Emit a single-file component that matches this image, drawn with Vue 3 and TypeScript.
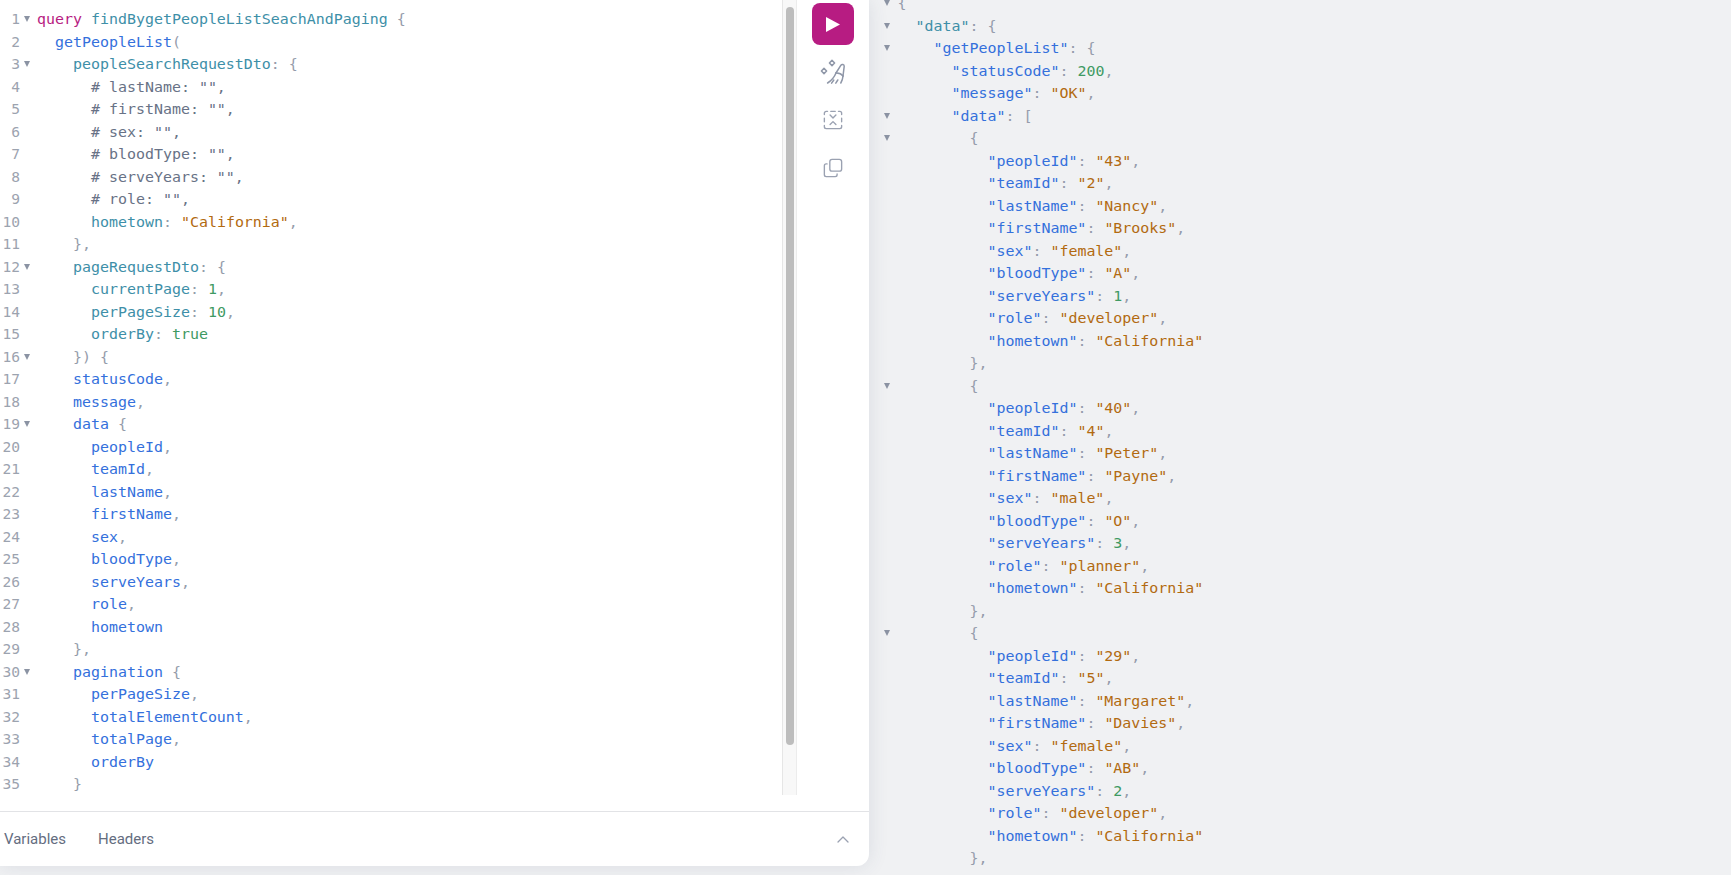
<script setup lang="ts">
type Tok = [string, string];
interface Line { indent: number; fold?: boolean; toks: Tok[] }

const L = (indent: number, fold: boolean, ...toks: Tok[]): Line => ({ indent, fold, toks });
const p = (s: string): Tok => ['pu', s];
const d = (s: string): Tok => ['de', s];
const f = (s: string): Tok => ['fi', s];
const c = (s: string): Tok => ['co', s];
const st = (s: string): Tok => ['st', s];
const n = (s: string): Tok => ['nu', s];
const k = (s: string): Tok => ['ke', s];
const sp: Tok = ['pu', ' '];

const query: Line[] = [
  L(0, true, k('query'), sp, d('findBygetPeopleListSeachAndPaging'), sp, p('{')),
  L(2, false, f('getPeopleList'), p('(')),
  L(4, true, d('peopleSearchRequestDto'), p(':'), sp, p('{')),
  L(6, false, c('# lastName: "",')),
  L(6, false, c('# firstName: "",')),
  L(6, false, c('# sex: "",')),
  L(6, false, c('# bloodType: "",')),
  L(6, false, c('# serveYears: "",')),
  L(6, false, c('# role: "",')),
  L(6, false, d('hometown'), p(':'), sp, st('"California"'), p(',')),
  L(4, false, p('},')),
  L(4, true, d('pageRequestDto'), p(':'), sp, p('{')),
  L(6, false, d('currentPage'), p(':'), sp, n('1'), p(',')),
  L(6, false, d('perPageSize'), p(':'), sp, n('10'), p(',')),
  L(6, false, d('orderBy'), p(':'), sp, n('true')),
  L(4, true, p('})'), sp, p('{')),
  L(4, false, f('statusCode'), p(',')),
  L(4, false, f('message'), p(',')),
  L(4, true, f('data'), sp, p('{')),
  ...['peopleId', 'teamId', 'lastName', 'firstName', 'sex', 'bloodType', 'serveYears', 'role'].map((x) =>
    L(6, false, f(x), p(',')),
  ),
  L(6, false, f('hometown')),
  L(4, false, p('},')),
  L(4, true, f('pagination'), sp, p('{')),
  L(6, false, f('perPageSize'), p(',')),
  L(6, false, f('totalElementCount'), p(',')),
  L(6, false, f('totalPage'), p(',')),
  L(6, false, f('orderBy')),
  L(4, false, p('}')),
];

const strProp = (indent: number, key: string, val: string, comma = true): Line =>
  L(indent, false, f(`"${key}"`), p(':'), sp, st(`"${val}"`), ...(comma ? [p(',')] : []));

const person = (
  id: string,
  team: string,
  last: string,
  first: string,
  sex: string,
  blood: string,
  years: string,
  role: string,
): Line[] => [
  L(8, true, p('{')),
  strProp(10, 'peopleId', id),
  strProp(10, 'teamId', team),
  strProp(10, 'lastName', last),
  strProp(10, 'firstName', first),
  strProp(10, 'sex', sex),
  strProp(10, 'bloodType', blood),
  L(10, false, f('"serveYears"'), p(':'), sp, n(years), p(',')),
  strProp(10, 'role', role),
  strProp(10, 'hometown', 'California', false),
  L(8, false, p('},')),
];

const result: Line[] = [
  L(0, true, p('{')),
  L(2, true, d('"data"'), p(':'), sp, p('{')),
  L(4, true, f('"getPeopleList"'), p(':'), sp, p('{')),
  L(6, false, f('"statusCode"'), p(':'), sp, n('200'), p(',')),
  strProp(6, 'message', 'OK'),
  L(6, true, f('"data"'), p(':'), sp, p('[')),
  ...person('43', '2', 'Nancy', 'Brooks', 'female', 'A', '1', 'developer'),
  ...person('40', '4', 'Peter', 'Payne', 'male', 'O', '3', 'planner'),
  ...person('29', '5', 'Margaret', 'Davies', 'female', 'AB', '2', 'developer'),
];

const pad = (i: number): string => ' '.repeat(i);
</script>

<template>
  <div class="page">
    <section class="editor-panel">
      <div class="editor-top">
        <div class="code query-code">
          <div v-for="(line, i) in query" :key="i" class="line">
            <span class="num">{{ i + 1 }}</span>
            <span class="fold"><i v-if="line.fold" class="tri"></i></span>
            <span class="text">{{ pad(line.indent) }}<span v-for="(t, j) in line.toks" :key="j" :class="t[0]">{{ t[1] }}</span></span>
          </div>
        </div>
        <div class="scroll-track"><div class="scroll-thumb"></div></div>
        <div class="toolbar">
          <button class="run" type="button" aria-label="Run">
            <svg width="14" height="15" viewBox="0 0 14 15"><path d="M0 0 L14 7.5 L0 15 Z" fill="#fff" /></svg>
          </button>
          <button class="tool first" type="button" aria-label="Prettify">
            <svg width="26" height="26" viewBox="0 0 26 26" fill="none" stroke="#8f97a8" stroke-width="1.5" stroke-linecap="round" stroke-linejoin="round">
              <path d="M12 1.4 L14.6 4 L12 6.6 L9.4 4 Z" />
              <path d="M4 9.4 L6.6 12 L4 14.6 L1.4 12 Z" />
              <path d="M16 14 L20.8 6.4 C21.8 4.8 24.4 5.4 24.2 7.4 L23 17" />
              <path d="M16 14 C18.2 13.8 21.4 15 23 17" />
              <path d="M16 14 C14.4 18 11.4 21.6 7.6 24" />
              <path d="M23 17 C22.8 19.6 22 22 20.8 24" />
              <path d="M11.6 24.2 L13.8 21 M15.8 24.2 L17.8 21" />
            </svg>
          </button>
          <button class="tool" type="button" aria-label="Merge">
            <svg width="20" height="20" viewBox="0 0 22 22" fill="none" stroke="#9aa1b1" stroke-width="1.5" stroke-linecap="round" stroke-linejoin="round">
              <path d="M1.5 5 V3.5 A2 2 0 0 1 3.5 1.5 H5 M8.5 1.5 H13.5 M17 1.5 H18.5 A2 2 0 0 1 20.5 3.5 V5" />
              <path d="M1.5 9 V13 M20.5 9 V13" />
              <path d="M1.5 17 V18.5 A2 2 0 0 0 3.5 20.5 H18.5 A2 2 0 0 0 20.5 18.5 V17" />
              <path d="M7.8 5.5 L11 8.7 L14.2 5.5 M7.8 16 L11 12.8 L14.2 16" />
            </svg>
          </button>
          <button class="tool" type="button" aria-label="Copy">
            <svg width="20" height="20" viewBox="0 0 22 22" fill="none" stroke="#9aa1b1" stroke-width="1.5" stroke-linecap="round" stroke-linejoin="round">
              <rect x="7.5" y="1.5" width="13" height="13" rx="2.5" />
              <path d="M4.5 6.5 H3.5 A2 2 0 0 0 1.5 8.5 V18.5 A2 2 0 0 0 3.5 20.5 H13.5 A2 2 0 0 0 15.5 18.5 V17.5" />
            </svg>
          </button>
        </div>
      </div>
      <footer class="tabs">
        <span class="tab">Variables</span>
        <span class="tab">Headers</span>
        <svg class="chevron" width="12" height="7" viewBox="0 0 12 7" fill="none" stroke="#9aa1b1" stroke-width="1.3" stroke-linecap="round" stroke-linejoin="round">
          <path d="M1 6 L6 1 L11 6" />
        </svg>
      </footer>
    </section>
    <section class="result-panel">
      <div class="code result-code">
        <div v-for="(line, i) in result" :key="i" class="line">
          <span class="fold"><i v-if="line.fold" class="tri"></i></span>
          <span class="text">{{ pad(line.indent) }}<span v-for="(t, j) in line.toks" :key="j" :class="t[0]">{{ t[1] }}</span></span>
        </div>
      </div>
    </section>
  </div>
</template>

<style scoped>
.page {
  display: flex;
  width: 1731px;
  height: 875px;
  overflow: hidden;
  background: #f0f1f3;
}
.editor-panel {
  position: relative;
  z-index: 1;
  flex: 0 0 869px;
  height: 866px;
  display: flex;
  flex-direction: column;
  background: #fff;
  border-bottom-right-radius: 12px;
  box-shadow: 0 0 20px rgba(59, 75, 104, 0.12);
}
.editor-top {
  display: flex;
  height: 811px;
  flex: none;
}
.code {
  font-family: "DejaVu Sans Mono", monospace;
  font-size: 14.95px;
  line-height: 22.5px;
  white-space: pre;
}
.query-code {
  flex: 0 0 782px;
  padding-top: 8px;
  overflow: hidden;
}
.line {
  display: flex;
  height: 22.5px;
  align-items: center;
}
.num {
  width: 20px;
  flex: none;
  text-align: right;
  color: #9ca3af;
  font-size: 14.6px;
}
.fold {
  flex: none;
  width: 17px;
  display: flex;
  align-items: center;
  justify-content: center;
}
.query-code .fold {
  justify-content: flex-start;
  padding-left: 4px;
  width: 13px;
  box-sizing: content-box;
}
.tri {
  display: block;
  width: 0;
  height: 0;
  border-left: 3.5px solid transparent;
  border-right: 3.5px solid transparent;
  border-top: 6px solid #8b93a3;
}
.text {
  flex: 1;
}
.scroll-track {
  flex: none;
  width: 15px;
  height: 795px;
  box-sizing: border-box;
  background: #f8f8f8;
  border-left: 1px solid #e6e6e6;
  border-right: 1px solid #ececec;
  padding: 7px 3px 0;
}
.scroll-thumb {
  width: 8px;
  height: 738px;
  background: #bdbdbd;
  border-radius: 4px;
}
.toolbar {
  flex: 1;
  display: flex;
  flex-direction: column;
  align-items: center;
  padding-top: 3px;
}
.run {
  width: 42px;
  height: 42px;
  padding: 0;
  border: 0;
  border-radius: 8px;
  background: #b71c82;
  display: flex;
  align-items: center;
  justify-content: center;
}
.tool {
  width: 42px;
  height: 48px;
  padding: 0;
  border: 0;
  background: none;
  display: flex;
  align-items: center;
  justify-content: center;
}
.tool.first {
  margin-top: 3px;
}
.tabs {
  flex: 1;
  display: flex;
  align-items: center;
  gap: 32px;
  padding-left: 4px;
  border-top: 1px solid #e2e3e6;
  font-family: Roboto, sans-serif;
  font-size: 15px;
  color: #646d7f;
  position: relative;
}
.chevron {
  position: absolute;
  right: 20px;
  top: 24px;
}
.result-panel {
  flex: 1;
  overflow: hidden;
}
.result-code {
  margin-top: -8px;
  padding-left: 9.5px;
}
.result-code .fold {
  width: 19px;
  justify-content: flex-start;
  padding-left: 5px;
  box-sizing: border-box;
}
.pu { color: #959cab; }
.co { color: #687286; }
.ke { color: #b71c82; }
.de { color: #3e8fa8; }
.fi { color: #3470dc; }
.st { color: #b26a10; }
.nu { color: #3f9a63; }
</style>

<style>
html, body { margin: 0; overflow: hidden; }
</style>
